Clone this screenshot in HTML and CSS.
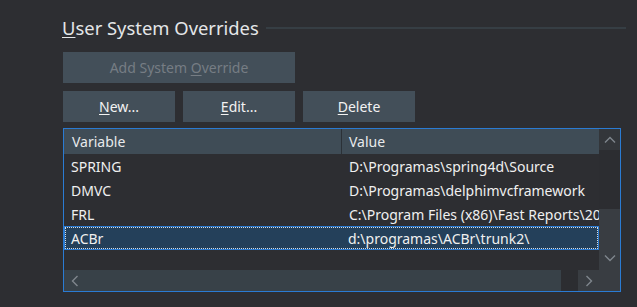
FILE: index.html
```html
<!DOCTYPE html>
<html>
<head>
<meta charset="utf-8">
<link rel="stylesheet" href="styles.css">
</head>
<body>
<div class="panel">
  <div class="group-title">
    <span class="title-text"><u>U</u>ser System Overrides</span>
    <span class="title-line"></span>
  </div>
  <div class="btn-row">
    <div class="btn btn-wide disabled"><span>Add System <u>O</u>verride</span></div>
  </div>
  <div class="btn-row">
    <div class="btn"><span><u>N</u>ew...</span></div>
    <div class="btn"><span><u>E</u>dit...</span></div>
    <div class="btn"><span><u>D</u>elete</span></div>
  </div>
  <div class="list">
    <div class="list-body">
      <div class="list-header">
        <div class="hcell hcell-var">Variable</div>
        <div class="hcell hcell-val">Value</div>
      </div>
      <div class="row"><div class="cell cell-var">SPRING</div><div class="cell cell-val">D:\Programas\spring4d\Source</div></div>
      <div class="row"><div class="cell cell-var">DMVC</div><div class="cell cell-val">D:\Programas\delphimvcframework</div></div>
      <div class="row"><div class="cell cell-var">FRL</div><div class="cell cell-val">C:\Program Files (x86)\Fast Reports\2021</div></div>
      <div class="row selected"><div class="cell cell-var">ACBr</div><div class="cell cell-val">d:\programas\ACBr\trunk2\</div></div>
    </div>
    <div class="vscroll">
      <div class="vs-up">
        <svg width="12" height="8" viewBox="0 0 12 8"><path d="M1 6.5 L6 1.5 L11 6.5" fill="none" stroke="#7f868d" stroke-width="1.4"/></svg>
      </div>
      <div class="vs-track"></div>
      <div class="vs-thumb">
        <svg width="12" height="8" viewBox="0 0 12 8"><path d="M1 1.5 L6 6.5 L11 1.5" fill="none" stroke="#7f868d" stroke-width="1.4"/></svg>
      </div>
    </div>
    <div class="hscroll">
      <div class="hs-thumb">
        <svg width="8" height="12" viewBox="0 0 8 12"><path d="M6.5 1 L1.5 6 L6.5 11" fill="none" stroke="#7f868d" stroke-width="1.4"/></svg>
      </div>
      <div class="hs-track"></div>
      <div class="hs-right">
        <svg width="8" height="12" viewBox="0 0 8 12"><path d="M1.5 1 L6.5 6 L1.5 11" fill="none" stroke="#7f868d" stroke-width="1.4"/></svg>
      </div>
    </div>
    <div class="corner"></div>
  </div>
</div>
</body>
</html>
```
FILE: styles.css
```css
html, body {
  margin: 0;
  padding: 0;
  background: #2d2e32;
}
body {
  font-family: "Noto Sans", "Open Sans", sans-serif;
  font-size: 14px;
  color: #f0f0f0;
  width: 637px;
  height: 307px;
  overflow: hidden;
}
u {
  text-decoration: underline;
  text-underline-offset: 2px;
}
.panel {
  padding: 16px 0 0 63px;
}
.group-title {
  display: flex;
  align-items: center;
  height: 24px;
  margin-left: -1px;
  margin-right: 11px;
}
.title-text {
  font-size: 18.4px;
  line-height: 24px;
  color: #e4e6e8;
  white-space: nowrap;
}
.title-line {
  flex: 1;
  height: 2px;
  margin-left: 7px;
  background: #363e44;
}
.btn-row {
  display: flex;
  gap: 8px;
  margin-top: 8px;
}
.group-title + .btn-row {
  margin-top: 12px;
}
.btn {
  width: 112px;
  height: 31px;
  background: #434f59;
  display: flex;
  align-items: center;
  justify-content: center;
  color: #f2f2f2;
  white-space: nowrap;
}
.btn-wide {
  width: 232px;
}
.btn.disabled {
  color: #767d84;
}
.list {
  margin-top: 6px;
  width: 556px;
  height: 162px;
  border: 1px solid #2a7bd3;
  display: grid;
  grid-template-columns: 535px 21px;
  grid-template-rows: 141px 21px;
}
.list-body {
  overflow: hidden;
  white-space: nowrap;
}
.list-header {
  display: flex;
  height: 25px;
  background: #3f4c56;
  color: #e8eaec;
}
.hcell {
  display: flex;
  align-items: center;
}
.hcell-var {
  width: 269px;
  padding-left: 8px;
  border-right: 1px solid #2b3137;
}
.hcell-val {
  padding-left: 7px;
}
.row {
  display: flex;
  height: 24px;
  align-items: center;
  box-sizing: border-box;
}
.cell {
  white-space: nowrap;
  overflow: hidden;
}
.cell-var {
  width: 271px;
  padding-left: 7px;
}
.cell-val {
  width: 250px;
  padding-left: 7px;
  flex: none;
}
.row.selected {
  background: #24405a;
  border: 1px solid #2a7bd3;
  outline: 1px dotted #d8dde2;
  outline-offset: -2px;
}
.row.selected .cell-var {
  width: 270px;
  padding-left: 6px;
}
.vscroll {
  display: flex;
  flex-direction: column;
}
.vs-up {
  height: 21px;
  background: #33363a;
  display: flex;
  align-items: center;
  justify-content: center;
}
.vs-track {
  height: 59px;
  background: #2c2d31;
}
.vs-thumb {
  flex: 1;
  background: #393d42;
  display: flex;
  align-items: flex-end;
  justify-content: center;
  padding-bottom: 8px;
}
.hscroll {
  display: flex;
}
.hs-thumb {
  width: 497px;
  background: #384148;
  display: flex;
  align-items: center;
  padding-left: 7px;
  box-sizing: border-box;
}
.hs-track {
  width: 17px;
  background: #2c2d31;
}
.hs-right {
  width: 21px;
  background: #393d42;
  display: flex;
  align-items: center;
  justify-content: center;
}
.corner {
  background: #393d42;
}
```
